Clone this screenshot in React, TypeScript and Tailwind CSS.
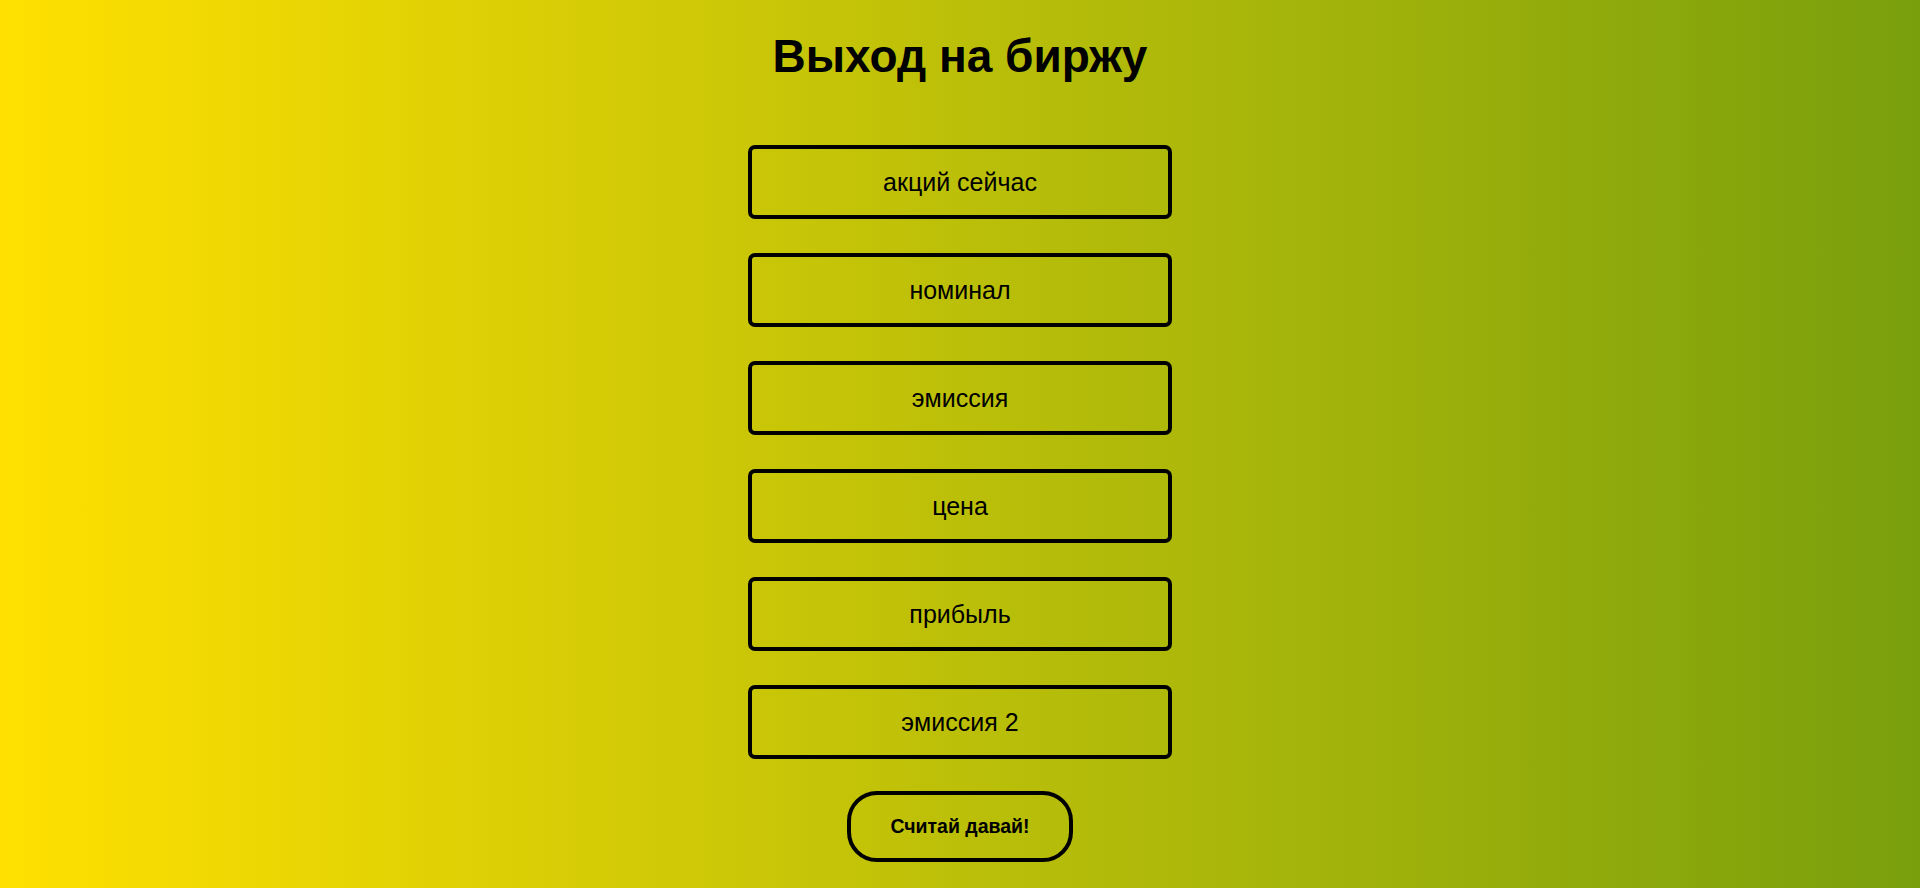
import React from "react";

const fields = [
  "акций сейчас",
  "номинал",
  "эмиссия",
  "цена",
  "прибыль",
  "эмиссия 2",
];

export default function App() {
  return (
    <div className="min-h-screen w-full bg-gradient-to-r from-[#ffe000] to-[#799f0c] font-['Liberation_Sans',Arial,sans-serif] text-black">
      <div className="flex flex-col items-center">
        <h1 className="mt-[30px] text-[46px] leading-[52px] font-bold">
          Выход на биржу
        </h1>
        <div className="mt-[63px] flex flex-col gap-[34px]">
          {fields.map((f) => (
            <input
              key={f}
              type="text"
              placeholder={f}
              className="h-[74px] w-[424px] rounded-[7px] border-4 border-black bg-transparent text-center text-[25px] outline-none placeholder:text-black"
            />
          ))}
        </div>
        <button className="mt-[32px] h-[71px] w-[226px] rounded-[30px] border-4 border-black bg-transparent text-[19.5px] font-bold">
          Считай давай!
        </button>
      </div>
    </div>
  );
}
